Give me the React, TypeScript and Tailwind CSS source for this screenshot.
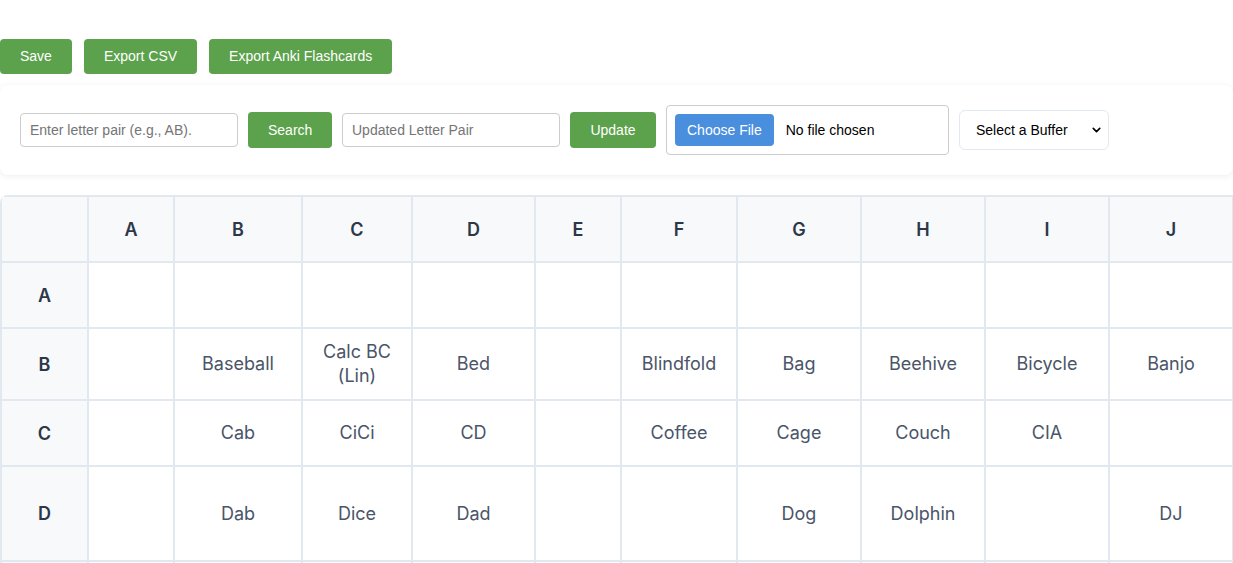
import { ChevronDown } from "lucide-react";

const columns = ["A", "B", "C", "D", "E", "F", "G", "H", "I", "J", "K", "L", "M", "N", "O", "P"];

const colWidths = [
  "w-[87px]",
  "w-[86px]",
  "w-[128px]",
  "w-[110px]",
  "w-[123px]",
  "w-[86px]",
  "w-[116px]",
  "w-[124px]",
  "w-[124px]",
  "w-[124px]",
  "w-[124px]",
  "w-[110px]",
  "w-[110px]",
  "w-[110px]",
  "w-[110px]",
  "w-[110px]",
  "w-[110px]",
];

const rows: { label: string; height: string; cells: Record<string, string> }[] = [
  { label: "A", height: "h-[66px]", cells: {} },
  {
    label: "B",
    height: "h-[72px]",
    cells: {
      B: "Baseball",
      C: "Calc BC (Lin)",
      D: "Bed",
      F: "Blindfold",
      G: "Bag",
      H: "Beehive",
      I: "Bicycle",
      J: "Banjo",
    },
  },
  {
    label: "C",
    height: "h-[66px]",
    cells: { B: "Cab", C: "CiCi", D: "CD", F: "Coffee", G: "Cage", H: "Couch", I: "CIA" },
  },
  {
    label: "D",
    height: "h-[95px]",
    cells: { B: "Dab", C: "Dice", D: "Dad", G: "Dog", H: "Dolphin", J: "DJ" },
  },
  { label: "E", height: "h-[66px]", cells: {} },
];

function GreenButton({ children, className = "" }: { children: React.ReactNode; className?: string }) {
  return (
    <button
      className={`bg-[#5ca14c] text-white text-[14px] rounded-[4px] px-5 hover:bg-[#4e8d40] ${className}`}
    >
      {children}
    </button>
  );
}

export default function App() {
  return (
    <div className="w-full min-h-screen bg-white font-['Liberation_Sans',Arial,sans-serif] overflow-hidden">
      {/* Top actions */}
      <div className="pt-[39px] flex gap-3">
        <GreenButton className="h-[35px]">Save</GreenButton>
        <GreenButton className="h-[35px]">Export CSV</GreenButton>
        <GreenButton className="h-[35px]">Export Anki Flashcards</GreenButton>
      </div>

      {/* Controls card */}
      <div className="mt-[11px] bg-white rounded-lg shadow-[0_1px_6px_rgba(0,0,0,0.08)] p-5 flex items-center gap-2.5">
        <input
          type="text"
          placeholder="Enter letter pair (e.g., AB)."
          className="w-[218px] h-[34px] border border-[#cccccc] rounded-[4px] px-[9px] text-[14px] text-black placeholder:text-[#757575] outline-none"
        />
        <GreenButton className="h-9 w-[84px] px-0">Search</GreenButton>
        <input
          type="text"
          placeholder="Updated Letter Pair"
          className="w-[218px] h-[34px] border border-[#cccccc] rounded-[4px] px-[9px] text-[14px] text-black placeholder:text-[#757575] outline-none"
        />
        <GreenButton className="h-9 w-[86px] px-0">Update</GreenButton>
        <input
          type="file"
          className="w-[283px] h-[50px] border border-[#cccccc] rounded-[4px] p-2 text-[14px] text-black file:h-8 file:px-3 file:mr-3 file:bg-[#4a8ede] file:text-white file:rounded-[4px] file:border-0 file:text-[14px]"
        />
        <div className="relative">
          <select className="appearance-none w-[150px] h-10 border border-[#e2e8f0] rounded-md pl-4 pr-6 text-[14px] text-black bg-white outline-none">
            <option>Select a Buffer</option>
            <option>Edges</option>
            <option>Corners</option>
          </select>
          <ChevronDown
            size={13}
            strokeWidth={3}
            className="absolute right-[6px] top-1/2 -translate-y-1/2 text-black pointer-events-none"
          />
        </div>
      </div>

      {/* Letter pair table */}
      <div className="mt-5 rounded-tl-lg overflow-x-auto font-['Inter',sans-serif]">
        <table className="table-fixed border-collapse w-[1782px]">
          <colgroup>
            {colWidths.map((w, i) => (
              <col key={i} className={w} />
            ))}
          </colgroup>
          <thead>
            <tr className="h-[66px]">
              <th className="border-2 border-[#e2e8f0] bg-[#f7f9fb]"></th>
              {columns.map((c) => (
                <th
                  key={c}
                  className="border-2 border-[#e2e8f0] bg-[#f7f9fb] text-[18px] font-semibold text-[#2d3748] text-center"
                >
                  {c}
                </th>
              ))}
            </tr>
          </thead>
          <tbody>
            {rows.map((r) => (
              <tr key={r.label} className={r.height}>
                <th className="border-2 border-[#e2e8f0] bg-[#f7f9fb] text-[18px] font-semibold text-[#2d3748] text-center">
                  {r.label}
                </th>
                {columns.map((c) => (
                  <td
                    key={c}
                    className="border-2 border-[#e2e8f0] px-3 py-2 text-[18px] leading-6 text-[#4a5568] text-center"
                  >
                    {r.cells[c] ?? ""}
                  </td>
                ))}
              </tr>
            ))}
          </tbody>
        </table>
      </div>
    </div>
  );
}
